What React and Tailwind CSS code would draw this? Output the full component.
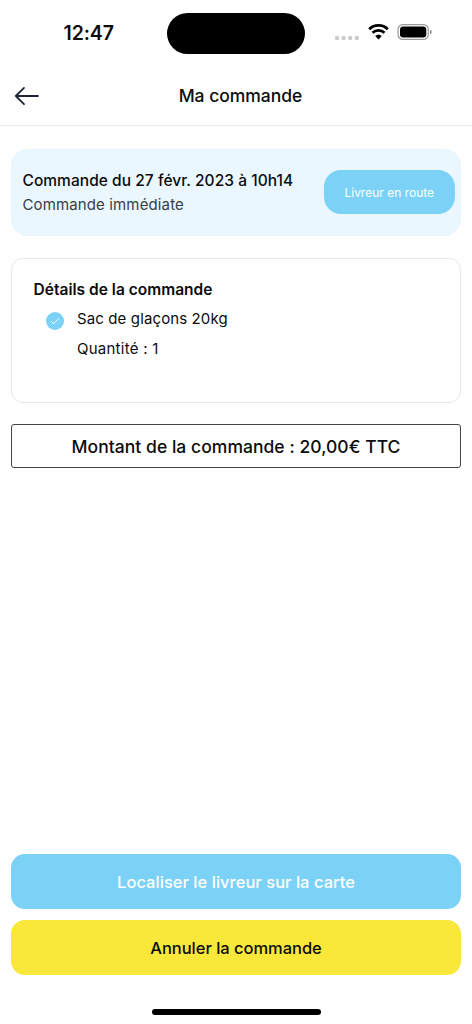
function StatusBar() {
  return (
    <div className="flex h-[65px] shrink-0 items-center">
      <div className="w-[167px] pl-[63.5px] text-[19.5px] font-semibold leading-6 tracking-[-0.1px]">12:47</div>
      <div className="mt-[1px] h-[41px] w-[138px] rounded-full bg-black" />
      <svg className="ml-[29px] mt-[10px] h-[6px] w-[26px]" viewBox="0 0 26 6" fill="#cccccc">
        <circle cx="3" cy="3" r="2.2" />
        <circle cx="9.6" cy="3" r="2.2" />
        <circle cx="16.2" cy="3" r="2.2" />
        <circle cx="22.8" cy="3" r="2.2" />
      </svg>
      <svg className="ml-[8px] mt-[-2px] h-[16px] w-[21px]" viewBox="0 0 21 16" fill="none" stroke="#000">
        <path d="M1.2 5.2 A13.3 13.3 0 0 1 19.8 5.2" strokeWidth="2.8" />
        <path d="M4.5 8.8 A8.6 8.6 0 0 1 16.5 8.8" strokeWidth="2.7" />
        <path d="M7.2 12.1 A4.8 4.8 0 0 1 13.8 12.1 L10.5 15.4 Z" fill="#000" stroke="none" />
      </svg>
      <svg className="ml-[8px] mt-[-1px] h-[16px] w-[36px]" viewBox="0 0 36 16">
        <rect x="1" y="0.6" width="30.3" height="14.8" rx="4.8" fill="none" stroke="#9a9a9a" strokeWidth="1.2" />
        <rect x="3" y="2.6" width="26.3" height="10.8" rx="3.2" fill="#000" />
        <path d="M33 5.6 C35.2 6.3 35.2 9.7 33 10.4 Z" fill="#888" />
      </svg>
    </div>
  );
}

function Header() {
  return (
    <header className="grid h-[61px] shrink-0 grid-cols-[60px_1fr_52px] items-center border-b border-[#ececec]">
      <svg className="ml-[13.5px] mt-[2px] h-[20px] w-[26px]" viewBox="0 0 26 20" fill="none" stroke="#1b2430" strokeWidth="1.8" strokeLinecap="round" strokeLinejoin="round">
        <path d="M24 10 H1.8 M10 1.9 L1.8 10 L10 18.1" />
      </svg>
      <h1 className="whitespace-nowrap pt-[2px] pl-[1px] text-center text-[17.5px] font-medium leading-6 tracking-[-0.02px]">Ma commande</h1>
    </header>
  );
}

export default function App() {
  return (
    <div className="flex h-[1024px] w-[472px] flex-col overflow-hidden bg-white font-['Inter',sans-serif] text-[#0c0c0c]">
      <StatusBar />
      <Header />
      <main className="flex flex-1 flex-col px-[11px] pt-[23px]">
        <section className="flex h-[87px] items-center justify-between rounded-[16px] bg-[#eaf7fe] pl-[11.5px] pr-[6px]">
          <div className="whitespace-nowrap">
            <p className="text-[15.5px] font-medium leading-6 tracking-[0.04px]">Commande du 27 févr. 2023 à 10h14</p>
            <p className="text-[15px] leading-6 tracking-[0.13px] text-[#383e42]">Commande immédiate</p>
          </div>
          <span className="mb-[1px] flex h-[44px] w-[131.5px] items-center justify-center whitespace-nowrap rounded-[17px] bg-[#7bd2f6] pt-[1px] text-[12px] text-white">Livreur en route</span>
        </section>

        <section className="mt-[22px] h-[145px] whitespace-nowrap rounded-[12px] border border-[#e6e6e6] pl-[21.5px] pt-[19px]">
          <h2 className="text-[15.5px] font-semibold leading-6 tracking-[0.02px]">Détails de la commande</h2>
          <div className="mt-[5px] flex pl-[12.5px]">
            <svg className="mt-[5px] size-[18px]" viewBox="0 0 18 18" fill="none">
              <circle cx="9" cy="9" r="9" fill="#7bd2f6" />
              <path d="M5.5 9.6 L7.7 11.6 L12.6 6.7" stroke="#fff" strokeWidth="1" strokeLinecap="round" strokeLinejoin="round" />
            </svg>
            <div className="ml-[13px] text-[15px] tracking-[0.12px]">
              <p className="leading-6">Sac de glaçons 20kg</p>
              <p className="mt-[6px] leading-6 tracking-[0.25px]">Quantité : 1</p>
            </div>
          </div>
        </section>

        <section className="mt-[21px] flex h-[44px] items-center justify-center whitespace-nowrap rounded-[3px] border border-[#444444] pt-[2px] text-[17.5px] font-medium tracking-[0.04px]">
          Montant de la commande : 20,00€ TTC
        </section>

        <div className="mb-[49px] mt-auto flex flex-col gap-[11px]">
          <button className="h-[55px] whitespace-nowrap rounded-[14px] bg-[#7bd2f6] pt-[2px] text-[16.5px] font-medium tracking-[0.03px] text-white">Localiser le livreur sur la carte</button>
          <button className="h-[55px] whitespace-nowrap rounded-[14px] bg-[#f9e73a] pt-[2px] text-[16.5px] font-medium tracking-[-0.03px]">Annuler la commande</button>
        </div>
      </main>
      <div className="absolute left-[152px] top-[1009px] h-[6px] w-[168.5px] rounded-full bg-black" />
    </div>
  );
}
